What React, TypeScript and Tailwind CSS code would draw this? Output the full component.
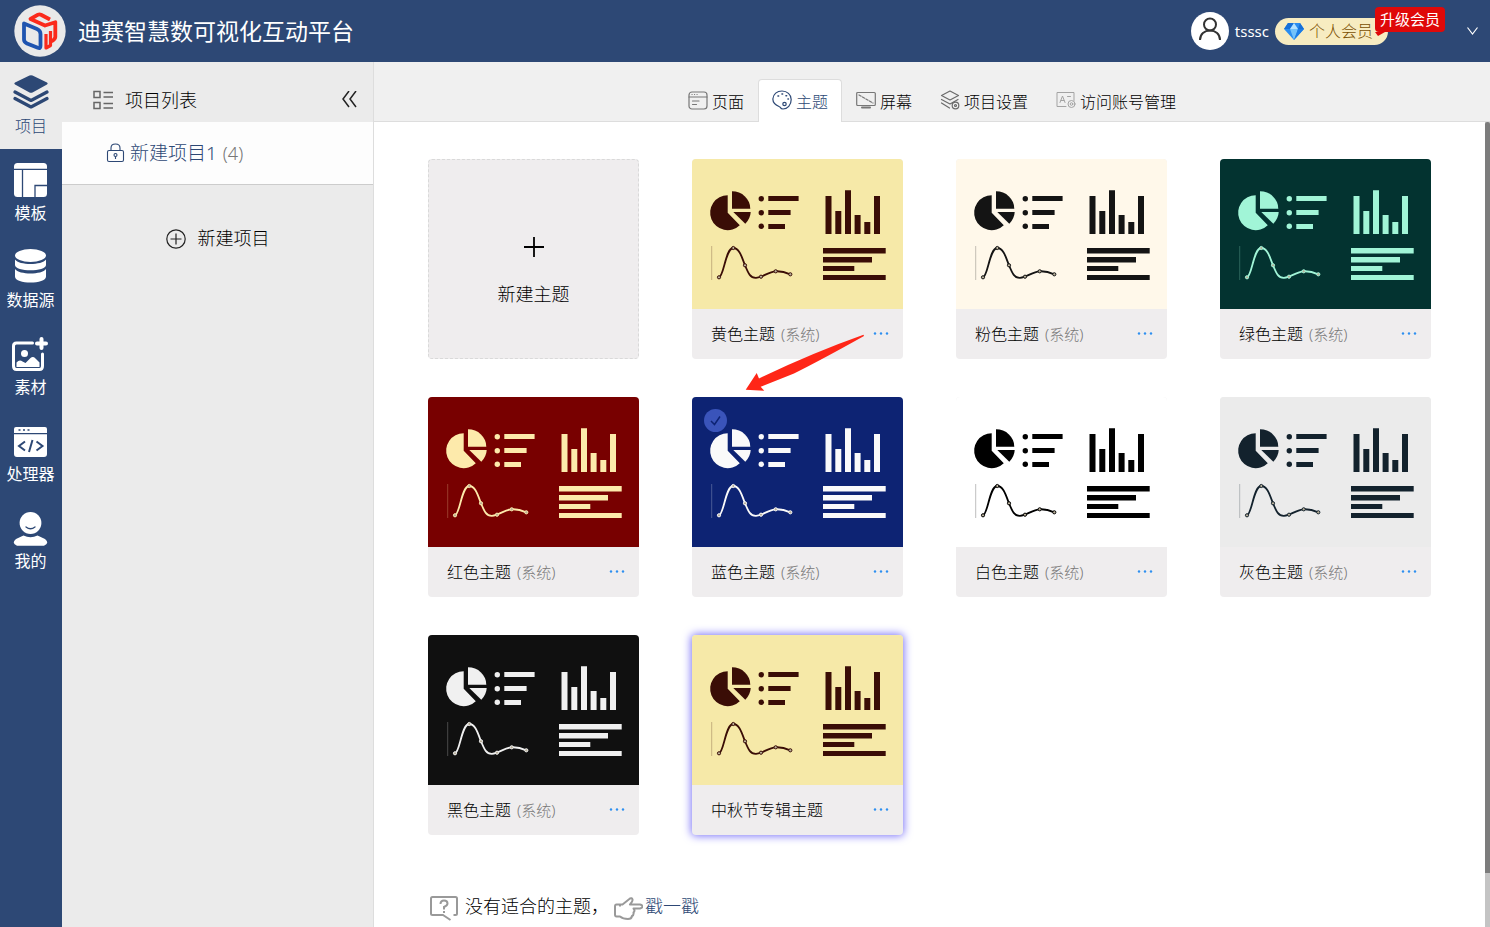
import { ReactNode } from 'react';
import clsx from 'clsx';

interface Theme {
  id: string;
  name: string;
  system?: boolean;
  background: string;
  color: string;
  selected?: boolean;
  highlighted?: boolean;
}

const themes: Theme[] = [
  { id: 'yellow', name: '黄色主题', system: true, background: 'bg-[#f6e9a8]', color: 'text-[#3a0d06]' },
  { id: 'pink', name: '粉色主题', system: true, background: 'bg-[#fff8ea]', color: 'text-[#141414]' },
  { id: 'green', name: '绿色主题', system: true, background: 'bg-[#033330]', color: 'text-[#a1f5d7]' },
  { id: 'red', name: '红色主题', system: true, background: 'bg-[#780000]', color: 'text-[#fdeaab]' },
  { id: 'blue', name: '蓝色主题', system: true, background: 'bg-[#0d2373]', color: 'text-[#fafafa]', selected: true },
  { id: 'white', name: '白色主题', system: true, background: 'bg-white', color: 'text-black' },
  { id: 'gray', name: '灰色主题', system: true, background: 'bg-[#ebebeb]', color: 'text-[#13222d]' },
  { id: 'black', name: '黑色主题', system: true, background: 'bg-[#101010]', color: 'text-[#f0f0f0]' },
  { id: 'festival', name: '中秋节专辑主题', background: 'bg-[#f6e9a8]', color: 'text-[#3a0d06]', highlighted: true },
];

const curvePoints = [
  [27, 118.3],
  [41.3, 89],
  [53, 106.3],
  [69, 117.7],
  [83.7, 112.3],
  [98.3, 115.3],
];

function Logo() {
  return (
    <svg viewBox="0 0 52 52" className="size-[52px]" aria-hidden="true">
      <circle cx="26" cy="26" r="25.7" fill="#e9e9e9" />
      <g fill="none" strokeWidth="3.800" strokeLinejoin="round">
        <path d="M10 18.500 23 24q3.500 1.500 3.500 5v12q0 2.800-2.700 1.800L13 38.500q-3-1.500-3-4Z" stroke="#1f54b0" />
        <path d="m36 14.500-9-4.800q-1.500-.7-3 0L16.500 14l14.500 6.500 10.300-3.300V32q0 2-3.800 4.500" stroke="#fb2a1c" />
        <path d="M32 29v14l4.500-2.500V26" stroke="#fb2a1c" strokeWidth="3.200" />
      </g>
    </svg>
  );
}

function ProjectIcon() {
  return (
    <svg viewBox="0 0 36 36" className="size-9" fill="currentColor" aria-hidden="true">
      <path d="M16.500 1.500q1.500-.7 3 0l14.500 7q1.500 1 0 2l-14.500 8q-1.500.7-3 0L2 10.500q-1.500-1 0-2Z" />
      <path d="M2 18l16 8.500L34 18M2 24.500 18 33l16-8.500" fill="none" stroke="currentColor" strokeWidth="3.200" strokeLinecap="round" strokeLinejoin="round" />
    </svg>
  );
}

function TemplateIcon() {
  return (
    <svg viewBox="1 -1 36 36" className="size-9 overflow-visible" fill="currentColor" aria-hidden="true">
      <rect x="2" y="1" width="33" height="34" rx="3.500" />
      <path d="M2 7.300h33M10.500 7.500V35M35 23.500H23V35" fill="none" stroke="#2d4875" strokeWidth="1.300" />
    </svg>
  );
}

function DatabaseIcon() {
  return (
    <svg viewBox="1 0 36 36" className="size-9" fill="currentColor" aria-hidden="true">
      <ellipse cx="18.500" cy="7.500" rx="15.500" ry="6.500" />
      <path d="M3 11.500c4 6 27 6 31 0v5.500c0 7-31 7-31 0Z" />
      <path d="M3 21c4 6 27 6 31 0v7.500c0 8-31 8-31 0Z" />
    </svg>
  );
}

function MaterialIcon() {
  return (
    <svg viewBox="2 -2 36 36" className="size-9 overflow-visible" fill="currentColor" aria-hidden="true">
      <path d="M21.500 6H5.500q-3 0-3 3v20q0 3.500 3 3.500h23q3 0 3-3.500V17" fill="none" stroke="currentColor" strokeWidth="3" strokeLinecap="round" />
      <path d="M30.500 2v9M26 6.500h9" stroke="currentColor" strokeWidth="4" strokeLinecap="round" />
      <circle cx="13.500" cy="16.500" r="3.500" />
      <path d="M5.500 25.500q3-3.500 6-1l3 1.500 5-5q2.500-2 5 .500l4 4v4.500h-23Z" />
    </svg>
  );
}

function ProcessorIcon() {
  return (
    <svg viewBox="1 -2 36 36" className="size-9" fill="currentColor" aria-hidden="true">
      <path d="M4 3h29q2 0 2 2v4H2V5q0-2 2-2ZM2 10.200h33V30q0 3-3 3H5q-3 0-3-3Z" />
      <path d="M6.500 6h2M11 6h2M15.500 6h2" stroke="#2d4875" strokeWidth="1.400" />
      <path d="m13 17.500-6 4.500 6 4.500M20.500 16 17 28M24.500 17.500l6 4.500-6 4.500" fill="none" stroke="#2d4875" strokeWidth="2" />
    </svg>
  );
}

function MineIcon() {
  return (
    <svg viewBox="1 -2 36 36" className="size-9 overflow-visible" fill="currentColor" aria-hidden="true">
      <circle cx="18.500" cy="12" r="10.900" />
      <path d="M14 16q4.500 3.500 9 0" fill="none" stroke="#2d4875" strokeWidth="1.300" strokeLinecap="round" />
      <path d="M11.500 24.500q7 3.500 14 0l7.500 3.500q5 4-1 6.800H5q-6-2.800-1-6.800Z" />
    </svg>
  );
}

const navItems: { label: string; icon: ReactNode }[] = [
  { label: '项目', icon: <ProjectIcon /> },
  { label: '模板', icon: <TemplateIcon /> },
  { label: '数据源', icon: <DatabaseIcon /> },
  { label: '素材', icon: <MaterialIcon /> },
  { label: '处理器', icon: <ProcessorIcon /> },
  { label: '我的', icon: <MineIcon /> },
];

function TabIcon({ children }: { children: ReactNode }) {
  return (
    <svg
      viewBox="0 0 20 20"
      className="mb-1 size-5"
      fill="none"
      stroke="currentColor"
      strokeWidth="1.200"
      strokeLinecap="round"
      strokeLinejoin="round"
      aria-hidden="true"
    >
      {children}
    </svg>
  );
}

const tabs: { label: string; icon: ReactNode }[] = [
  {
    label: '页面',
    icon: (
      <g className="text-[#777777]" stroke="currentColor">
        <rect x="1" y="2" width="18" height="17" rx="3" />
        <path d="M1 7h18M4.500 11h6.500M4.500 14.500h4" />
        <path d="M4 4.500h.100M6.500 4.500h.100M9 4.500h.100" />
      </g>
    ),
  },
  {
    label: '主题',
    icon: (
      <g>
        <path d="M7 16.500C2.500 14.500.700 12 .900 8.800 1.200 4 5 1 10 1s9.200 3.500 9.200 8.500c0 5.500-3.700 9.500-8.200 9.500-3 0-2.500-2.500-4-2.500Z" />
        <circle cx="12.500" cy="14" r="1.700" />
        <path d="M6 6h.6M10 4h.6M14 5.800h.6M16 9h.4" strokeWidth="1.600" />
      </g>
    ),
  },
  {
    label: '屏幕',
    icon: (
      <g className="text-[#777777]" stroke="currentColor">
        <rect x=".700" y="2.500" width="18.600" height="13" rx="1" />
        <path d="m3 5 14 8" strokeDasharray="2.500 1.500" />
        <path d="M6 17.500h8" strokeWidth="2" />
      </g>
    ),
  },
  {
    label: '项目设置',
    icon: (
      <g className="text-[#6b6b6b]" stroke="currentColor">
        <path d="m10 1 8.500 4.500L10 10 1.500 5.500ZM1.500 9.500 10 14l8-4.500M1.500 13l8 5" />
        <circle cx="15.500" cy="15.500" r="3.300" fill="#f0f0f0" />
        <circle cx="15.500" cy="15.500" r="1" />
      </g>
    ),
  },
  {
    label: '访问账号管理',
    icon: (
      <g className="text-[#a3a3a3]" stroke="currentColor" strokeWidth="1">
        <path d="M10 16.500H1v-14h17v8M4 12.500l2.500-6.500L9 12.500M5 10.500h3M11.500 6.500h3" />
        <circle cx="15.500" cy="14" r="3.500" />
        <circle cx="15.500" cy="14" r="1.300" />
      </g>
    ),
  },
];

function ThemePreview() {
  return (
    <svg viewBox="0 0 211 150" className="w-full" fill="currentColor" aria-hidden="true">
      <path d="M35.700 53.700V36.200a17.500 17.500 0 1 0 12.100 30.100Z" />
      <path d="M40 49.700V32.300a18.300 17.400 0 0 1 18.300 17.400Z" />
      <path d="M41.300 53h17.400q-.3 6.500-5.400 11.700Z" />
      <circle cx="69.300" cy="39.700" r="2.700" />
      <circle cx="69.300" cy="53.700" r="2.700" />
      <circle cx="69.300" cy="67.300" r="2.700" />
      <path d="M76.300 37h30.300v5H76.300ZM76.300 51h22.300v5H76.300ZM76.300 65h16.700v5H76.300Z" />
      <path d="M133.500 37h6v38h-6ZM143.300 52h6v23h-6ZM153 31.300h6V75h-6ZM162.600 56h6v19h-6ZM172.300 63h6v12h-6ZM182 37h6v38h-6Z" />
      <path d="M131 89h62.700v5.500H131ZM131 98h49v5.500h-49ZM131 107h31.300v5H131ZM131 116h62.700v5H131Z" />
      <path d="M19.700 87v34" stroke="currentColor" opacity="0.250" />
      <path
        d="M27 118.300C32 117 33.500 89 41.300 89 47.500 89 50 98.500 53 106.300 56.500 115 58.500 119 64 118.800 71 118.500 76 112.800 83.700 112.300 89 112 93 113 98.300 115.300"
        fill="none"
        stroke="currentColor"
        strokeWidth="1.800"
      />
      {curvePoints.map(([x, y]) => (
        <circle key={x} cx={x} cy={y} r="1.600" stroke="currentColor" strokeWidth="1" className="fill-[#b9b09a]" />
      ))}
    </svg>
  );
}

function ThemeCard({ theme }: { theme: Theme }) {
  return (
    <article
      className={clsx(
        'relative flex h-[200px] flex-col rounded bg-[#efedee]',
        theme.highlighted && 'shadow-[0_0_8px_1px_#7c74f8]'
      )}
    >
      <div className={clsx('h-[150px] overflow-hidden rounded-t', theme.background, theme.color)}>
        <ThemePreview />
      </div>
      <div className="flex flex-1 items-center justify-between pr-[13px] pl-[19px]">
        <h3 className="text-base whitespace-nowrap">
          {theme.name}
          {theme.system && <span className="ml-[6px] text-[15px] text-[#777777]">(系统)</span>}
        </h3>
        <button type="button" aria-label={`${theme.name}更多操作`}>
          <svg viewBox="0 0 18 18" className="size-[18px] fill-[#2e8ff0]" aria-hidden="true">
            <circle cx="3" cy="8.500" r="1.200" />
            <circle cx="9" cy="8.500" r="1.200" />
            <circle cx="15" cy="8.500" r="1.200" />
          </svg>
        </button>
      </div>
      {theme.selected && (
        <>
          {/* Selected mark */}
          <svg viewBox="0 0 23 23" className="absolute top-3 left-3 size-[23px]" aria-hidden="true">
            <circle cx="11.500" cy="11.500" r="11.500" fill="#3a54ba" />
            <path d="m7 12 3.500 3.500L16 7.500" fill="none" stroke="#0d2373" strokeWidth="1.500" />
          </svg>
          {/* Pointer arrow */}
          <svg viewBox="0 0 120 58" className="absolute -top-[63px] left-[53px] w-[120px]" aria-hidden="true">
            <path d="M.700 55.700 11.700 39l2.300 5.500Q67 19 118.500.800l.500 1.200Q78 25 49 39.500L15.700 52.800l3.600 3.900Z" fill="#ff2617" />
          </svg>
        </>
      )}
    </article>
  );
}

function Header() {
  return (
    <header className="flex h-[62px] items-center bg-[#2d4875] pr-3 pl-[14px] font-normal text-white">
      <Logo />
      <h1 className="ml-3 text-[23px] whitespace-nowrap">迪赛智慧数可视化互动平台</h1>
      <div className="ml-auto flex items-center">
        <span className="flex size-[38px] items-center justify-center rounded-full bg-white">
          <svg viewBox="0 0 24 24" className="mb-1 size-6" fill="none" stroke="#333333" strokeWidth="2" aria-hidden="true">
            <circle cx="12" cy="7.500" r="6" />
            <path d="M2 23c0-6 4.500-9.500 10-9.500S22 17 22 23" />
          </svg>
        </span>
        <span className="ml-[6px] text-[15px]">tsssc</span>
        <div className="relative ml-[6px] flex h-[27px] w-[113px] items-center gap-[5px] rounded-full bg-[#f7ecc1] pl-[9px] text-base font-light text-[#7a4f00]">
          <svg viewBox="0 0 20 18" className="w-5" aria-hidden="true">
            <path d="M4 1h12l4 6-10 11L0 7Z" fill="#2a8df0" />
            <path d="M4 1 0 7h6l4-6ZM16 1l4 6h-6Z" fill="#1670d8" />
            <path d="m10 1-4 6h8Z" fill="#b4e2ff" />
            <path d="M6 7h8l-4 11Z" fill="#73c2fa" />
            <path d="m14 7-4 11L20 7Z" fill="#1d7de5" />
          </svg>
          <span className="whitespace-nowrap">个人会员</span>
          <button
            type="button"
            className="absolute -top-[11px] left-[100px] h-[25px] rounded-sm bg-[#df0909] px-[5px] text-[15px] leading-[25px] font-normal whitespace-nowrap text-white"
          >
            升级会员
            <svg viewBox="0 0 10 5" className="absolute top-full left-0 w-[10px]" aria-hidden="true">
              <path d="M0 0h10L3 4Z" fill="#df0909" />
            </svg>
          </button>
        </div>
        <button type="button" aria-label="账号菜单" className="ml-[79px]">
          <svg viewBox="0 0 11 10" className="w-[11px]" fill="none" stroke="currentColor" strokeWidth="1.200" aria-hidden="true">
            <path d="m.500 1.500 5 6.500 5-6.500" />
          </svg>
        </button>
      </div>
    </header>
  );
}

function ProjectPanel() {
  return (
    <aside className="w-[312px] shrink-0 border-r border-[#dddddd] bg-[#ebebeb] text-[18px]">
      <div className="flex h-[60px] items-center pt-4 pr-[15px] pl-[30px]">
        <svg viewBox="0 0 22 20" className="w-[22px]" fill="none" stroke="#666666" strokeWidth="1.500" aria-hidden="true">
          <path d="M2 1.500h6v6H2ZM2 12.500h6v6H2ZM11.500 2.500H21M11.500 7H21M11.500 13.500H21M11.500 18H21" />
        </svg>
        <h2 className="ml-[11px]">项目列表</h2>
        <button type="button" aria-label="收起" className="ml-auto">
          <svg viewBox="0 1 18 18" className="size-[18px]" fill="none" stroke="#222222" strokeWidth="1.500" aria-hidden="true">
            <path d="M9 1 3 9l6 8M16 1l-6 8 6 8" />
          </svg>
        </button>
      </div>
      <a href="#project" className="flex h-[63px] items-center border-b border-[#cccccc] bg-[#fdfdfd] pl-[44px] text-[19px] text-[#2d4875]">
        <svg viewBox="0 0 20 20" className="size-5" fill="none" stroke="currentColor" strokeWidth="1.100" aria-hidden="true">
          <rect x="1.500" y="7.500" width="16" height="11" rx="1.500" />
          <path d="M5 7.500V5q0-4 4.500-4T14 5v2.500" />
          <circle cx="9.500" cy="12" r="1.500" />
          <path d="M9.500 13.500V16" />
        </svg>
        <span className="ml-1">新建项目1</span>
        <span className="ml-[6px] text-[18px] text-[#777777]">(4)</span>
      </a>
      <button type="button" className="mx-auto mt-10 flex items-center gap-3">
        <svg viewBox="0 0 20 20" className="size-5" fill="none" stroke="#222222" strokeWidth="1.200" aria-hidden="true">
          <circle cx="10" cy="10" r="9.200" />
          <path d="M4.500 10h11M10 4.500v11" />
        </svg>
        新建项目
      </button>
    </aside>
  );
}

export default function App() {
  return (
    <div className="flex min-h-screen flex-col bg-white font-['Noto_Sans','Noto_Sans_CJK_SC',sans-serif] font-light text-black">
      <Header />
      <div className="flex flex-1">
        {/* Main navigation */}
        <nav className="w-[62px] shrink-0 bg-[#2d4875]">
          {navItems.map((item, index) => (
            <a
              key={item.label}
              href={`#${item.label}`}
              className={clsx(
                'flex h-[87px] flex-col items-center gap-1 pt-3 text-base whitespace-nowrap',
                index === 0 ? 'bg-[#ebebeb] text-[#2d4875]' : 'pr-px font-normal text-white'
              )}
            >
              {item.icon}
              {item.label}
            </a>
          ))}
        </nav>

        <ProjectPanel />

        <main className="flex min-w-0 flex-1 flex-col">
          {/* Tabs */}
          <div className="flex h-[60px] items-end justify-center border-b border-[#dddddd] bg-[#f0f0f0]">
            {tabs.map((tab) => (
              <button
                key={tab.label}
                type="button"
                className={clsx(
                  '-mb-px flex h-[43px] items-center gap-1 rounded-t border border-b-0 px-[13px] pt-[2px] text-base whitespace-nowrap',
                  tab.label === '主题' ? 'border-[#dddddd] bg-white text-[#2d4875]' : 'border-transparent'
                )}
              >
                <TabIcon>{tab.icon}</TabIcon>
                {tab.label}
              </button>
            ))}
          </div>

          <div className="flex flex-1">
            <div className="flex-1 px-[54px] pt-[37px] pb-2">
              {/* Themes */}
              <div className="grid grid-cols-[repeat(auto-fill,211px)] gap-x-[53px] gap-y-[38px]">
                <button
                  type="button"
                  className="flex h-[200px] flex-col items-center justify-center gap-6 rounded border border-dashed border-[#d9d9d9] bg-[#efedee] pt-[26px] text-[18px]"
                >
                  <svg viewBox="0 0 20 20" className="size-5" stroke="#000000" strokeWidth="1.800" aria-hidden="true">
                    <path d="M0 10h20M10 0v20" />
                  </svg>
                  新建主题
                </button>
                {themes.map((theme) => (
                  <ThemeCard key={theme.id} theme={theme} />
                ))}
              </div>

              <p className="mt-14 flex items-center text-[18px] leading-7">
                <svg viewBox="0 0 30 26" className="mt-1 w-[30px]" fill="none" stroke="#999999" strokeWidth="2" aria-hidden="true">
                  <path d="M15.500 20H4.500q-1.500 0-1.500-1.500v-15Q3 2 4.500 2h23q1.500 0 1.500 1.500v15q0 1.500-1.500 1.500h-2M15 20l7.500 5" />
                  <path d="M12.500 9q0-3.500 3.500-3.500t3.500 3q0 2-3.500 3.500v2.500M16 16v2" />
                </svg>
                <span className="ml-[7px]">没有适合的主题，</span>
                <svg viewBox="0 0 30 24" className="mt-1 ml-1 w-[30px]" fill="none" stroke="#999999" strokeWidth="2" strokeLinejoin="round" aria-hidden="true">
                  <path d="M7 8.500h2.500L17 2.500q2-1 2.500 1 .500 2-2.500 5h10q2.500.5 2.500 2T27 12.500h-6.500q2 2 0 4 .500 2.500-1.500 3.500-.5 3-4 3-5 0-8-2.500H3.500Q2 20.500 2 18.500v-8q0-2 1.500-2H7v2" />
                </svg>
                <a href="#feedback" className="ml-[2px] text-[#2d4875]">戳一戳</a>
              </p>
            </div>
            {/* Scroll track */}
            <div className="flex w-[5px] flex-col bg-[#c4c4c4]">
              <div className="h-[93%] rounded-t-sm bg-[#7c7c7c]" />
            </div>
          </div>
        </main>
      </div>
    </div>
  );
}
